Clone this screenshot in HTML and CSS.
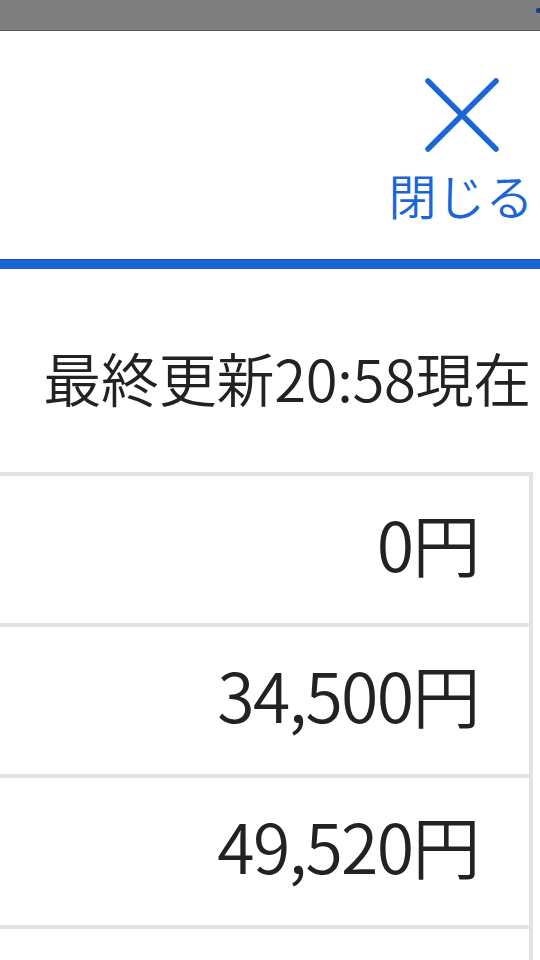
FILE: index.html
```html
<!DOCTYPE html>
<html lang="ja">
<head>
<meta charset="utf-8">
<title>閉じる</title>
<link rel="stylesheet" href="styles.css">
</head>
<body>
<div class="statusbar"><span class="status-dot"></span></div>
<header class="header">
  <button class="close" type="button">
    <svg class="close-icon" width="80" height="80" viewBox="0 0 80 80" aria-hidden="true">
      <path d="M6 6 L74 74 M74 6 L6 74" fill="none" stroke="#1a66d6" stroke-width="5.5" stroke-linecap="round"/>
    </svg>
    <span class="close-label">閉じる</span>
  </button>
</header>
<main class="content">
  <p class="updated">最終更新20:58現在</p>
  <div class="prices">
    <div class="price-row"><span class="amount">0円</span></div>
    <div class="price-row"><span class="amount">34,500円</span></div>
    <div class="price-row"><span class="amount">49,520円</span></div>
    <div class="price-row"><span class="amount"></span></div>
  </div>
</main>
</body>
</html>
```
FILE: styles.css
```css
* { box-sizing: border-box; }
html, body {
  margin: 0;
  padding: 0;
  background: #ffffff;
  font-family: "Noto Sans CJK JP", "Noto Sans", sans-serif;
  color: #222222;
  overflow: hidden;
}
.statusbar {
  height: 31px;
  background: #7f7f7f;
  border-bottom: 1px solid #555555;
  display: flex;
  justify-content: flex-end;
  align-items: flex-start;
}
.status-dot {
  width: 4px;
  height: 5px;
  margin-top: 8px;
  background: #1f3f7a;
  border-radius: 2px 0 0 2px;
}
.header {
  height: 238px;
  border-bottom: 9px solid #1a66d6;
  box-shadow: inset 0 -1px 0 #0f4fae;
  display: flex;
  justify-content: flex-end;
  padding-right: 6px;
  padding-top: 44px;
}
.close {
  background: none;
  border: 0;
  padding: 0;
  margin: 0;
  display: flex;
  flex-direction: column;
  align-items: center;
  font-family: inherit;
  cursor: pointer;
}
.close-icon {
  display: block;
  margin-right: -2px;
}
.close-label {
  display: block;
  margin-top: 15px;
  font-size: 48px;
  font-weight: 350;
  line-height: 1;
  color: #1a66d6;
  letter-spacing: 0.5px;
}
.content {
  padding: 0;
}
.updated {
  margin: 79px 0 0 0;
  padding-right: 9px;
  text-align: right;
  font-size: 58px;
  font-weight: 350;
  line-height: 1;
  color: #222222;
  letter-spacing: -0.3px;
}
.prices {
  margin-top: 66px;
  width: 533px;
}
.price-row {
  height: 151px;
  border-top: 4px solid #e3e3e3;
  border-right: 4px solid #e3e3e3;
  display: flex;
  align-items: center;
  justify-content: flex-end;
  padding-right: 50px;
  padding-bottom: 14px;
}
.amount {
  font-size: 68px;
  font-weight: 350;
  line-height: 1;
  color: #222222;
  letter-spacing: -1.6px;
}
```
